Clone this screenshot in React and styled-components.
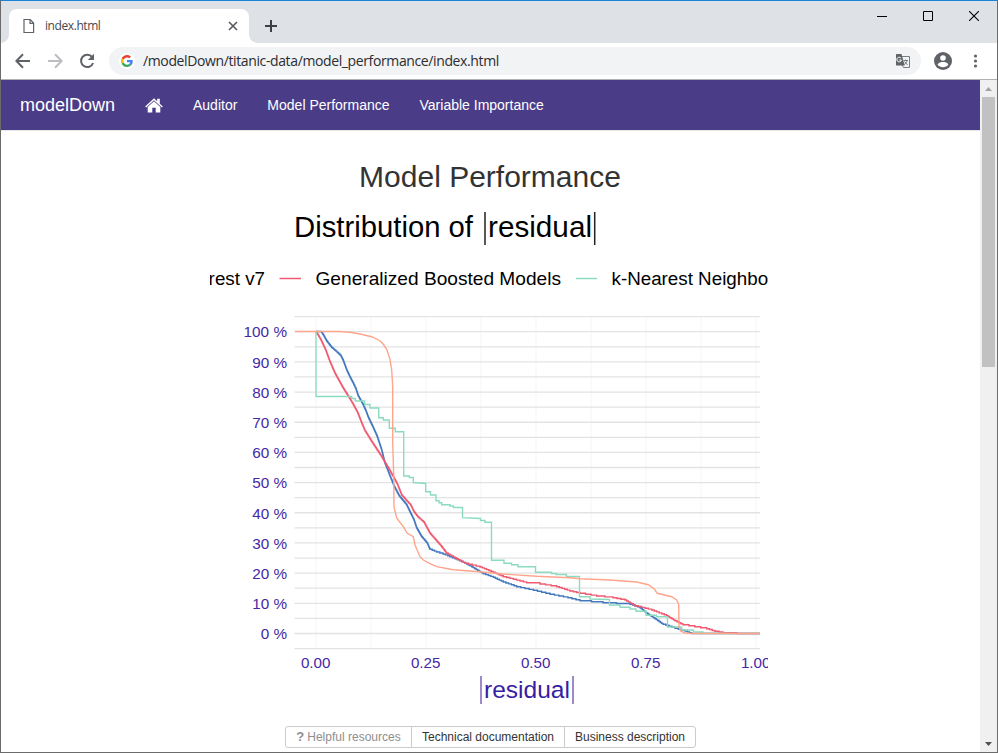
import React from "react";
import styled, { createGlobalStyle } from "styled-components";

const GlobalStyle = createGlobalStyle`
  *, *::before, *::after { box-sizing: border-box; }
  body { margin: 0; overflow: hidden; background: #fff; }
`;

const Window = styled.div`
  width: 998px;
  height: 753px;
  display: flex;
  flex-direction: column;
  overflow: hidden;
  border: 1px solid #6b6b6b;
  border-top-color: #1883d7;
  background: #fff;
  font-family: "Liberation Sans", Arial, sans-serif;
`;

const TabStrip = styled.header`
  flex: none;
  height: 42px;
  display: flex;
  padding-left: 8px;
  background: #dee1e6;
`;

const Tab = styled.div`
  position: relative;
  width: 240px;
  height: 34px;
  margin-top: 8px;
  padding: 0 11px 0 14px;
  display: flex;
  align-items: center;
  background: #fff;
  border-radius: 8px 8px 0 0;

  &::before,
  &::after {
    content: "";
    position: absolute;
    bottom: 0;
    width: 8px;
    height: 8px;
  }
  &::before {
    left: -8px;
    background: radial-gradient(circle at 0 0, transparent 7.5px, #fff 8px);
  }
  &::after {
    right: -8px;
    background: radial-gradient(circle at 100% 0, transparent 7.5px, #fff 8px);
  }
`;

const TabTitle = styled.span`
  flex: 1;
  margin-left: 10px;
  font: 12px/16px "Open Sans", sans-serif;
  letter-spacing: -0.42px;
  color: #45484c;
`;

const NewTab = styled.div`
  margin: 18px 0 0 15px;
  height: 14px;
  display: flex;
`;

const WindowControls = styled.div`
  margin-left: auto;
  display: flex;
`;

const WindowControl = styled.div`
  width: 46px;
  height: 29px;
  display: flex;
  align-items: center;
  justify-content: center;
`;

const Toolbar = styled.div`
  flex: none;
  height: 37px;
  display: flex;
  align-items: center;
  padding: 0 14px;
  border-bottom: 1px solid #b0b1b5;
  background: #fff;
`;

const NavButtons = styled.div`
  width: 94px;
  display: flex;
  gap: 16px;
`;

const AddressBar = styled.div`
  width: 812px;
  height: 28px;
  display: flex;
  align-items: center;
  padding: 0 10px;
  border-radius: 14px;
  background: #f1f3f4;
`;

const SiteBadge = styled.div`
  width: 16px;
  height: 16px;
  display: flex;
  align-items: center;
  justify-content: center;
  border-radius: 50%;
  background: #fff;
`;

const Address = styled.span`
  flex: 1;
  margin-left: 8px;
  font: 14px/20px "Open Sans", sans-serif;
  letter-spacing: -0.38px;
  color: #2b2d31;
`;

const ToolbarActions = styled.div`
  flex: 1;
  display: flex;
  align-items: center;
  justify-content: space-between;
  padding-left: 13px;
`;

const Viewport = styled.div`
  flex: 1;
  min-height: 0;
  display: flex;
`;

const Page = styled.main`
  width: 979px;
  overflow: hidden;
  display: flex;
  flex-direction: column;
  align-items: center;
`;

const Navbar = styled.nav`
  flex: none;
  width: 100%;
  height: 51px;
  display: flex;
  align-items: center;
  padding-left: 19px;
  border-bottom: 1px solid #e7e7e7;
  background: #4b3c88;
  color: #fff;
`;

const Brand = styled.a`
  width: 125px;
  font-size: 18px;
  line-height: 20px;
`;

const NavLink = styled.a`
  margin-left: 30px;
  font-size: 14px;
  line-height: 20px;
  white-space: nowrap;
`;

const Heading = styled.h2`
  margin: 29px 0 6px -1px;
  font-size: 30px;
  font-weight: 400;
  line-height: 33px;
  color: #333;
`;

const Chart = styled.svg`
  flex: none;
  width: 558px;
  height: 520px;
  margin-left: -3px;
  font-family: "Liberation Sans", Arial, sans-serif;
`;

const ButtonGroup = styled.div`
  flex: none;
  margin-top: 7px;
  width: 411px;
  height: 22px;
  display: flex;
  border: 1px solid #ccc;
  border-radius: 3px;
`;

const GroupButton = styled.button`
  width: ${(p) => p.$width}px;
  padding: 0;
  display: flex;
  align-items: center;
  justify-content: center;
  gap: 3px;
  border: 0;
  border-left: ${(p) => (p.$first ? "0" : "1px solid #ccc")};
  background: none;
  font: 12px/18px "Liberation Sans", Arial, sans-serif;
  color: ${(p) => (p.disabled ? "#8e8e8e" : "#333")};
  white-space: nowrap;
`;

const HelpMark = styled.span`
  font-size: 13px;
  font-weight: 700;
`;

const Scrollbar = styled.div`
  width: 17px;
  display: flex;
  flex-direction: column;
  align-items: center;
  background: #f0f0f0;
`;

const ScrollArrow = styled.div`
  width: 17px;
  height: 17px;
  display: flex;
  align-items: center;
  justify-content: center;
`;

const ScrollThumb = styled.div`
  width: 13px;
  height: 270px;
  margin-bottom: auto;
  background: #c1c1c1;
`;

const FileIcon = () => (
  <svg width="12" height="16" viewBox="0 0 12 16" fill="none" stroke="#5f6368" strokeWidth="1.2">
    <path d="M1 1.5H7.2L10.6 5V14.5H1Z M7 1.5V5.3H10.6" />
  </svg>
);

const CloseTabIcon = () => (
  <svg width="10" height="10" viewBox="0 0 10 10" stroke="#55585d" strokeWidth="1.6">
    <path d="M1 1L9 9M9 1L1 9" />
  </svg>
);

const PlusIcon = () => (
  <svg width="14" height="14" viewBox="0 0 14 14" stroke="#3c4043" strokeWidth="2">
    <path d="M7 1V13M1 7H13" />
  </svg>
);

const ArrowIcon = ({ color, forward }) => (
  <svg width="16" height="16" viewBox="0 0 16 16" fill="none" stroke={color} strokeWidth="2">
    <path d={forward ? "M1 8H14M8 1.3L14.6 8L8 14.7" : "M15 8H2M8 1.3L1.4 8L8 14.7"} />
  </svg>
);

const ReloadIcon = () => (
  <svg width="16" height="16" viewBox="0 0 16 16">
    <path d="M13.2 4.1A6.2 6.2 0 1 0 14.1 10" fill="none" stroke="#5f6368" strokeWidth="2" />
    <path d="M15 .8V7H8.8Z" fill="#5f6368" />
  </svg>
);

const GoogleIcon = () => (
  <svg width="12" height="12" viewBox="0 0 48 48">
    <path fill="#ea4335" d="M24 9.5c3.5 0 6.7 1.2 9.2 3.6l6.9-6.9C35.9 2.4 30.5 0 24 0 14.6 0 6.5 5.4 2.6 13.2l8 6.2C12.4 13.7 17.7 9.5 24 9.5z" />
    <path fill="#4285f4" d="M47 24.5c0-1.6-.2-3.1-.4-4.5H24v9h12.9c-.6 3-2.3 5.5-4.8 7.2l7.7 6C44.4 38 47 31.8 47 24.5z" />
    <path fill="#fbbc05" d="M10.5 28.6a14.500 14.500 0 0 1 0-9.200l-8-6.200a24 24 0 0 0 0 21.600z" />
    <path fill="#34a853" d="M24 48c6.5 0 11.900-2.100 15.900-5.800l-7.700-6c-2.200 1.500-5 2.300-8.200 2.300-6.300 0-11.600-4.200-13.500-9.900l-8 6.200C6.500 42.600 14.600 48 24 48z" />
  </svg>
);

const TranslateIcon = () => (
  <svg width="16" height="16" viewBox="0 0 16 16">
    <path d="M6.5 3.500H14.500V14.500H8.500L6.500 11" fill="#f1f3f4" stroke="#7b7f84" />
    <path d="M1.500 1H6.500L9.700 12.500H1.500Q1 12.500 1 12V1.500Q1 1 1.500 1Z" fill="#5f6368" />
    <path d="M6 5.200A2.300 2.300 0 1 0 6.400 7H4.300" fill="none" stroke="#fff" />
    <path d="M8.500 7.500H13M10.700 6.500V8M12 8C11.500 10 10 11 9 11.600M9.500 8.500L12.500 12" fill="none" stroke="#6d7176" strokeWidth=".9" />
  </svg>
);

const ProfileIcon = () => (
  <svg width="18" height="18" viewBox="0 0 18 18">
    <circle cx="9" cy="9" r="9" fill="#5f6368" />
    <circle cx="9" cy="6" r="2.8" fill="#fff" />
    <path d="M3.6 12.4C4.5 10.700 7 10.100 9 10.100S13.500 10.700 14.400 12.400A6.500 6.500 0 0 1 3.600 12.400Z" fill="#fff" />
  </svg>
);

const MenuIcon = () => (
  <svg width="16" height="16" viewBox="0 0 16 16" fill="#5f6368">
    <circle cx="8.5" cy="3" r="1.6" />
    <circle cx="8.5" cy="8" r="1.6" />
    <circle cx="8.5" cy="13" r="1.6" />
  </svg>
);

const HomeIcon = () => (
  <svg width="18" height="15" viewBox="0 0 18 15" fill="#fff">
    <path d="M9 0.3L12.2 3.300V.8H14.800V5.700L17.800 8.600L16.900 9.600L9 2.300L1.100 9.600L.2 8.600Z" />
    <path d="M9 3.200L15.300 9V14.400H10.700V9.800H7.300V14.400H2.700V9Z" />
  </svg>
);

const curves = [
  {
    color: "#4378bf",
    points: "316,331.5 321,331.5 324,336 326.7,341 331.7,347.5 338,353 341,356 343.3,360.7 346.7,370 350,377 353.3,383.3 356,389 358.3,396 363.3,405 366,411 368.3,417.3 373,427 377.3,436.7 381.7,450 385,463.3 389,473.3 394,486 399.3,496 406.7,505 410.7,513.3 414,520 416.7,528 421.7,536.7 427.3,543.3 430,549.3 436.7,552 443,554 450,556.7 460,560.7 471.7,566.7 483.3,573.7 493.3,577.3 503.3,582 516.7,586.7 533.3,590.3 550,594.3 568,597.7 580,600.7 603,602.7 630,604.3 640,607.7 646.7,613.3 655,618.7 663,624.3 675,628.3 685,631 691.7,633.5 760,633.5",
    step: 0.9,
  },
  {
    color: "#f05a71",
    points: "316,331.5 321,340 325.7,350 330,361.7 335,373.3 343.3,388.3 349,397.3 353,404 357.7,412.7 361.7,423 365,430.7 373.3,444 381.7,456.7 390,470.7 397.3,484 401.7,495 406,500 410.7,505 414,511.7 418,517 424.3,522.7 430,533.3 441.7,546.7 446.7,553.3 456.7,558.7 465,563.3 480,567 493.3,572.3 503.3,576.7 526.7,582.7 540,584 556.7,586.7 570,591 580,593.3 596.7,596 613,597.7 625,600 635,605.7 651.7,610 666.7,615.7 675,620.7 683,624.7 706.7,628.7 715,631.3 723,632.7 737,633.5 760,633.5",
    step: 0.9,
  },
  {
    color: "#8bdcbe",
    points: "316,331.5 316,396.5 351.7,396.5 351.7,398.5 355.3,398.5 355.3,401 364.7,401 364.7,404.5 370,404.5 370,408 378.7,408 378.7,417.7 383.3,417.7 383.3,420 389.3,420 389.3,428.3 395.3,428.3 395.3,431.7 403.7,431.7 403.7,476 409.3,476 409.3,477.5 413.3,477.5 413.3,482.5 425.7,483.5 425.7,491.7 430.5,491.7 430.5,495 436,495 436,500.7 439,500.7 439,502.7 441.7,502.7 441.7,504.7 450,504.7 450,506 453.5,506 453.5,507.5 462.5,507.5 462.5,517.7 480.5,518.5 480.5,520.5 485,520.5 485,522.3 491.5,522.3 491.5,560.3 504,560.3 504,563.3 511.5,563.3 511.5,564.7 518,564.7 518,566.7 535.5,566.7 535.5,572.3 551.5,572.3 551.5,573.5 556,573.5 556,574.5 566.5,574.5 566.5,576.5 579.5,576.5 579.5,596.7 590,596.7 590,599 609.5,599.5 609.5,605 620,605 620,607.3 630,607.3 630,609 636,609 636,611.3 646,611.3 646,615.3 656.5,615.3 656.5,616.7 667.5,616.7 667.5,627 681.5,627 681.5,630 693.5,630 693.5,632 703,632 703,633 727,633.5 760,633.5",
  },
  {
    color: "#ffa58c",
    points: "295,331.5 340,331.5 350,332.3 360,334 371.7,336.7 380,340.7 383.5,344.5 386.7,349.3 390,359.3 391.7,370 392.7,386.7 392.7,443 393.7,475 394,507 396.7,518 399,521 403.3,526.7 407.3,533.3 413.3,536.7 415,545 420,556.7 423.3,560 430,563.7 436.7,566.7 453.3,569.7 480,571.7 503,574 536.7,576.3 570,577.7 580,578.7 610,580 636.7,582 648.3,584.7 654.3,589 657.3,593.3 671.7,596.7 676.7,600 678.7,604.3 679,627.3 680.7,631 685,633 692,633.5 760,633.5",
  },
];

const stepped = ({ points, step }) => {
  if (!step) return points;
  const source = points.split(" ").map((p) => p.split(",").map(Number));
  const result = [source[0]];
  for (let i = 1; i < source.length; i++) {
    const [x0, y0] = source[i - 1];
    const [x1, y1] = source[i];
    const count = Math.max(1, Math.round(Math.abs(y1 - y0) / step));
    for (let k = 1; k <= count; k++) {
      const x = x0 + ((x1 - x0) * k) / count;
      const y = y0 + ((y1 - y0) * k) / count;
      result.push([x, result[result.length - 1][1]], [x, y]);
    }
  }
  return result.map((p) => p.join(",")).join(" ");
};

const yTicks = [100, 90, 80, 70, 60, 50, 40, 30, 20, 10, 0];
const xTicks = ["0.00", "0.25", "0.50", "0.75", "1.00"];

const Fitted = ({ x, y, width, size, fill = "#000", children }) => (
  <text x={x} y={y} fontSize={size} fill={fill} textLength={width} lengthAdjust="spacingAndGlyphs">
    {children}
  </text>
);

const ResidualChart = () => (
  <Chart viewBox="210 199 558 520">
    <Fitted x={294} y={237} width={179} size={29.5}>Distribution of</Fitted>
    <Fitted x={488} y={237} width={104} size={29.5}>residual</Fitted>
    <path d="M485 212V245M594.7 212V245" stroke="#222" strokeWidth="1.5" />

    <text x={265} y={285} fontSize={18.8} textAnchor="end">Random Forest v7</text>
    <path d="M279.5 278.500H301" stroke="#f05a71" strokeWidth="1.5" />
    <Fitted x={315.5} y={285} width={245.5} size={19}>Generalized Boosted Models</Fitted>
    <path d="M576 278.500H597" stroke="#8bdcbe" strokeWidth="1.5" />
    <text x={611.5} y={285} fontSize={18.8}>k-Nearest Neighbours</text>

    {Array.from({ length: 9 }, (_, i) => (
      <path key={i} d={`M${316 + i * 55} 316.5V649`} stroke="#f7f7f7" strokeWidth="1.2" />
    ))}
    {Array.from({ length: 23 }, (_, i) => (
      <path key={i} d={`M294.5 ${316.6 + i * 15.09}H760`} stroke="#e3e3e3" strokeWidth="1.3" />
    ))}
    {curves.map((curve) => (
      <polyline key={curve.color} points={stepped(curve)} fill="none" stroke={curve.color} strokeWidth="1.4" />
    ))}

    {yTicks.map((tick, i) => (
      <text key={tick} x={287} y={337.3 + i * 30.2} fontSize={15.3} fill="#4428a6" textAnchor="end">
        {tick} %
      </text>
    ))}
    {xTicks.map((tick, i) => (
      <text key={tick} x={315.7 + i * 110} y={668} fontSize={15.2} fill="#4428a6" textAnchor="middle">
        {tick}
      </text>
    ))}
    <Fitted x={484} y={698} width={86} size={24.5} fill="#371ea3">residual</Fitted>
    <path d="M481 676V704M573 676V704" stroke="#6c4bb0" strokeWidth="1.3" />
  </Chart>
);

export default function App() {
  return (
    <>
      <GlobalStyle />
      <Window>
        <TabStrip>
          <Tab>
            <FileIcon />
            <TabTitle>index.html</TabTitle>
            <CloseTabIcon />
          </Tab>
          <NewTab><PlusIcon /></NewTab>
          <WindowControls>
            <WindowControl>
              <svg width="10" height="10"><path d="M0 5.5H10" stroke="#000" /></svg>
            </WindowControl>
            <WindowControl>
              <svg width="10" height="10"><path d="M.5 .5H9.5V9.5H.5Z" fill="none" stroke="#000" /></svg>
            </WindowControl>
            <WindowControl>
              <svg width="10" height="10"><path d="M0 0L10 10M10 0L0 10" stroke="#000" strokeWidth="1.1" /></svg>
            </WindowControl>
          </WindowControls>
        </TabStrip>

        <Toolbar>
          <NavButtons>
            <ArrowIcon color="#5f6368" />
            <ArrowIcon color="#bbbdc0" forward />
            <ReloadIcon />
          </NavButtons>
          <AddressBar>
            <SiteBadge><GoogleIcon /></SiteBadge>
            <Address>/modelDown/titanic-data/model_performance/index.html</Address>
            <TranslateIcon />
          </AddressBar>
          <ToolbarActions>
            <ProfileIcon />
            <MenuIcon />
          </ToolbarActions>
        </Toolbar>

        <Viewport>
          <Page>
            <Navbar>
              <Brand>modelDown</Brand>
              <HomeIcon />
              <NavLink>Auditor</NavLink>
              <NavLink>Model Performance</NavLink>
              <NavLink>Variable Importance</NavLink>
            </Navbar>
            <Heading>Model Performance</Heading>
            <ResidualChart />
            <ButtonGroup>
              <GroupButton $first $width={125} disabled>
                <HelpMark>?</HelpMark>
                Helpful resources
              </GroupButton>
              <GroupButton $width={153}>Technical documentation</GroupButton>
              <GroupButton $width={131}>Business description</GroupButton>
            </ButtonGroup>
          </Page>
          <Scrollbar>
            <ScrollArrow>
              <svg width="7" height="4"><path d="M3.5 0L7 4H0Z" fill="#a3a3a3" /></svg>
            </ScrollArrow>
            <ScrollThumb />
            <ScrollArrow>
              <svg width="7" height="4"><path d="M0 0H7L3.5 4Z" fill="#505050" /></svg>
            </ScrollArrow>
          </Scrollbar>
        </Viewport>
      </Window>
    </>
  );
}
